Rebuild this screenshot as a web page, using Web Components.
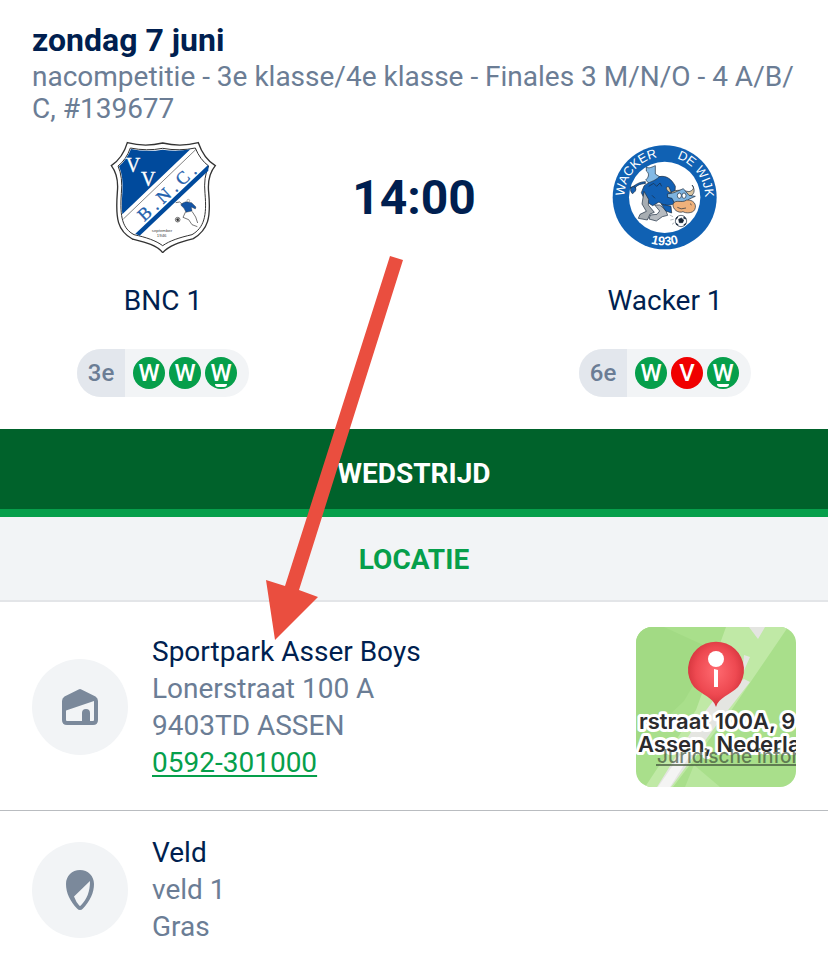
<!DOCTYPE html>
<html lang="nl">
<head>
<meta charset="utf-8">
<meta name="viewport" content="width=device-width, initial-scale=1">
<title>BNC 1 - Wacker 1</title>
<style>
    body {
        margin: 0;
        background: #fff;
        font-family: Roboto, "Liberation Sans", sans-serif;
        font-size: 28px;
        line-height: 32px;
        color: #001f50;
        --navy: #001f50;
        --grey: #6b7d95;
        --green: #069f4b;
        --dark-green: #00622b;
        --soft: #f2f4f6;
    }
</style>
</head>
<body>
<match-page>
    <match-header>
        <span slot="date">zondag 7 juni</span>
        <span slot="competition">nacompetitie - 3e klasse/4e klasse - Finales 3 M/N/O - 4 A/B/<wbr>C, #139677</span>
        <team-card slot="home" rank="3e" form="W W W">
            <bnc-logo slot="logo"></bnc-logo>
            BNC 1
        </team-card>
        <span slot="time">14:00</span>
        <team-card slot="away" rank="6e" form="W V W">
            <wacker-logo slot="logo"></wacker-logo>
            Wacker 1
        </team-card>
    </match-header>
    <tab-bar>WEDSTRIJD</tab-bar>
    <section-title>LOCATIE</section-title>
    <info-row>
        <home-icon slot="icon"></home-icon>
        <span slot="title">Sportpark Asser Boys</span>
        <span>Lonerstraat 100 A</span>
        <span>9403TD ASSEN</span>
        <a href="tel:0592301000">0592-301000</a>
        <map-preview slot="end"></map-preview>
    </info-row>
    <info-row last>
        <field-icon slot="icon"></field-icon>
        <span slot="title">Veld</span>
        <span>veld 1</span>
        <span>Gras</span>
    </info-row>
    <pointer-arrow slot="overlay"></pointer-arrow>
</match-page>

<script>
// Page shell, the overlay lies on top of the content
class MatchPage extends HTMLElement {
    constructor() {
        super();
        this.attachShadow({ mode: 'open' });
    }

    connectedCallback() {
        this.shadowRoot.innerHTML = `
            <style>
                :host {
                    display: block;
                    position: relative;
                }
            </style>
            <main><slot></slot></main>
            <slot name="overlay"></slot>
        `;
    }
}

class MatchHeader extends HTMLElement {
    constructor() {
        super();
        this.attachShadow({ mode: 'open' });
    }

    connectedCallback() {
        this.shadowRoot.innerHTML = `
            <style>
                :host {
                    display: block;
                    padding: 24px 32px 32px;
                }
                h1 {
                    margin: 0 0 5px;
                    font-size: 32px;
                    font-weight: 700;
                    line-height: 32px;
                }
                p {
                    margin: 0 0 16px;
                    color: var(--grey);
                }
                .teams {
                    display: grid;
                    grid-template-columns: 1fr 240px 1fr;
                }
                .time {
                    font-size: 48px;
                    font-weight: 700;
                    line-height: 114px;
                    text-align: center;
                }
            </style>
            <h1><slot name="date"></slot></h1>
            <p><slot name="competition"></slot></p>
            <div class="teams">
                <slot name="home"></slot>
                <div class="time"><slot name="time"></slot></div>
                <slot name="away"></slot>
            </div>
        `;
    }
}

class TeamCard extends HTMLElement {
    constructor() {
        super();
        this.attachShadow({ mode: 'open' });
    }

    connectedCallback() {
        const results = this.getAttribute('form').split(' ');
        this.shadowRoot.innerHTML = `
            <style>
                :host {
                    display: flex;
                    flex-direction: column;
                    align-items: center;
                    gap: 32px;
                }
                .form {
                    display: flex;
                    align-items: center;
                    gap: 4px;
                    height: 48px;
                    padding-right: 12px;
                    border-radius: 24px;
                    overflow: hidden;
                    background: var(--soft);
                }
                .rank {
                    width: 48px;
                    margin-right: 4px;
                    font-size: 24px;
                    font-weight: 500;
                    line-height: 48px;
                    text-align: center;
                    color: var(--grey);
                    background: #e3e7ed;
                }
            </style>
            <slot name="logo"></slot>
            <div><slot></slot></div>
            <div class="form">
                <span class="rank">${this.getAttribute('rank')}</span>
                ${results.map((r, i) => `<result-badge result="${r}" ${i === results.length - 1 ? 'latest' : ''}></result-badge>`).join('')}
            </div>
        `;
    }
}

// W = gewonnen, V = verloren
class ResultBadge extends HTMLElement {
    constructor() {
        super();
        this.attachShadow({ mode: 'open' });
    }

    connectedCallback() {
        this.shadowRoot.innerHTML = `
            <style>
                :host {
                    display: block;
                    position: relative;
                    width: 32px;
                    border-radius: 50%;
                    font-size: 24px;
                    font-weight: 500;
                    line-height: 32px;
                    text-align: center;
                    color: #fff;
                    background: var(--green);
                }
                :host([result="V"]) {
                    background: #f00000;
                }
                :host([latest])::after {
                    content: "";
                    position: absolute;
                    left: 10px;
                    bottom: 2px;
                    width: 12px;
                    height: 3px;
                    border-radius: 0 0 6px 6px;
                    background: #fff;
                }
            </style>
            ${this.getAttribute('result')}
        `;
    }
}

class BncLogo extends HTMLElement {
    constructor() {
        super();
        this.attachShadow({ mode: 'open' });
    }

    connectedCallback() {
        this.shadowRoot.innerHTML = `
            <style>
                :host, svg {
                    display: block;
                    width: 112px;
                    height: 112px;
                }
            </style>
            <svg viewBox="21 30 336 336" font-family="Liberation Serif, serif">
                <path d="M82 35Q135 49 188 36Q242 49 295 35Q311 82 346 104Q321 134 326 184C333 260 325 296 280 323C239 334 208 342 188 365C170 342 136 334 97 324C53 300 46 264 52 184Q57 134 34 104Q69 80 82 35Z" fill="#fff" stroke="#333" stroke-width="4"/>
                <path d="M91 51Q140 61 188 52Q238 61 286 51Q300 86 326 105Q310 139 315 188C321 255 312 290 276 311C237 320 210 329 188 344C168 329 139 319 102 311C68 293 59 259 64 188Q69 138 54 105Q78 87 91 51Z" fill="#fff" stroke="#333" stroke-width="3"/>
                <path d="M93 54Q140 64 188 56Q230 63 271 55L67 250Q64 224 67 186Q71 138 57 106Q79 88 93 54Z" fill="#004a9c"/>
                <path d="M288 55L70 264" stroke="#444" stroke-width="2"/>
                <path d="M325 101L106 308L119 314L325 119Z" fill="#004a9c"/>
                <g fill="#fff" stroke="#fff" font-size="60">
                    <text x="77" y="124">V</text>
                    <text x="123" y="164">V</text>
                </g>
                <text transform="translate(133 273) rotate(-43)" fill="#1f61ad" stroke="#1f61ad" font-size="54" xml:space="preserve">B . N . C .</text>
                <g fill="#1454a4" stroke="#222" stroke-width="1">
                    <path d="M248 216L258 212L275 215L288 228L286 234L274 228L276 240L258 244L252 232L242 222Z"/>
                    <path d="M257 242L249 259L266 266L276 281L292 287M276 241L287 258L293 276M227 215L239 213L247 220" fill="none" stroke="#333" stroke-width="2"/>
                    <circle cx="265" cy="209" r="4" fill="#fff"/>
                    <circle cx="233" cy="266" r="7" fill="#fff" stroke="#333" stroke-width="2"/>
                    <path d="M229 264L235 262L237 268L232 271Z" fill="#333"/>
                </g>
                <g fill="#444" font-family="Liberation Sans, sans-serif" font-size="13" text-anchor="middle">
                    <text x="186" y="304">september</text>
                    <text x="185" y="318">1946</text>
                </g>
            </svg>
        `;
    }
}

class WackerLogo extends HTMLElement {
    constructor() {
        super();
        this.attachShadow({ mode: 'open' });
    }

    connectedCallback() {
        this.shadowRoot.innerHTML = `
            <style>
                :host, svg {
                    display: block;
                    width: 112px;
                    height: 112px;
                }
            </style>
            <svg viewBox="27 15 336 336" font-family="Liberation Sans, sans-serif">
                <defs>
                    <path id="top" d="M73 183A121 121 0 0 1 315 183"/>
                    <path id="bottom" d="M49 183A145 145 0 0 0 339 183"/>
                </defs>
                <circle cx="194" cy="184" r="156" fill="#1061b3"/>
                <circle cx="194" cy="184" r="107" fill="#fff"/>
                <g fill="#fff" font-size="38">
                    <text><textPath href="#top" startOffset="2">WACKER</textPath></text>
                    <text><textPath href="#top" startOffset="227">DE WIJK</textPath></text>
                    <text font-size="38" font-weight="700" text-anchor="middle"><textPath href="#bottom" startOffset="50%">1930</textPath></text>
                </g>
                <g stroke="#18283c" stroke-width="2" stroke-linejoin="round">
                    <path d="M136 143C119 143 105 150 105 161C98 164 91 160 91 153C98 157 110 137 136 137Z" fill="#155fb2"/>
                    <path d="M105 153C92 148 87 162 97 173C105 168 111 162 105 153Z" fill="#155fb2"/>
                    <path d="M139 93C147 99 158 92 166 89L166 114L185 126L176 144L151 146L137 132C149 121 147 111 139 105Z" fill="#83b9e5"/>
                    <path d="M132 150C145 137 162 138 178 122C200 117 216 131 226 151L223 202C211 211 189 209 177 198L158 209L136 195L124 170Z" fill="#1260b4"/>
                    <path d="M132 166L126 204L139 226L120 235L115 247L142 252L150 234L163 229L145 207L146 190Z" fill="#a7adb2"/>
                    <path d="M164 207L179 225L171 235L151 237L147 249L169 255L187 242L203 238L197 222L179 207Z" fill="#b6bbc0"/>
                    <path d="M184 205L213 211L215 231L197 225Z" fill="#1260b4"/>
                    <path d="M207 153C194 148 198 165 211 170C232 158 248 164 267 167C281 163 284 154 276 147C288 163 282 178 267 182L217 178Z" fill="#d9c4a0"/>
                    <path d="M222 170L250 158L267 178L286 181L266 190L262 205L224 202L216 187L203 184L202 174Z" fill="#7db3df"/>
                    <path d="M219 204C227 188 245 203 260 192C279 190 292 205 284 221C278 233 256 232 249 227C235 233 217 220 219 204Z" fill="#efb17b"/>
                    <ellipse cx="238" cy="179" rx="6" ry="8" fill="#fff"/>
                    <ellipse cx="252" cy="179" rx="6" ry="8" fill="#fff"/>
                    <path d="M146 151L161 142L170 151L180 141L185 151M232 214Q242 222 258 216M270 203L275 207M156 178L165 187" fill="none"/>
                    <circle cx="243" cy="255" r="17" fill="#fff"/>
                    <path d="M236 250L244 246L251 252L248 260L238 260ZM228 246L234 242L229 250ZM252 242L258 249L251 247ZM229 262L235 267L229 266ZM251 267L257 262L255 267Z" fill="#172433"/>
                    <path d="M219 242L209 237M221 250L211 252M223 260L216 265" stroke="#8b949c"/>
                </g>
            </svg>
        `;
    }
}

class TabBar extends HTMLElement {
    constructor() {
        super();
        this.attachShadow({ mode: 'open' });
    }

    connectedCallback() {
        this.shadowRoot.innerHTML = `
            <style>
                :host {
                    display: flex;
                    background: var(--dark-green);
                }
                button {
                    flex: 1;
                    padding: 29px 0 19px;
                    border: 0;
                    border-bottom: 8px solid var(--green);
                    background: none;
                    font: inherit;
                    font-weight: 700;
                    color: #fff;
                }
            </style>
            <button type="button"><slot></slot></button>
        `;
    }
}

class SectionTitle extends HTMLElement {
    constructor() {
        super();
        this.attachShadow({ mode: 'open' });
    }

    connectedCallback() {
        this.shadowRoot.innerHTML = `
            <style>
                :host {
                    display: block;
                    border-bottom: 2px solid #e3e5e8;
                    background: var(--soft);
                }
                h2 {
                    margin: 0;
                    padding: 27px 0 24px;
                    font-size: 28px;
                    font-weight: 700;
                    text-align: center;
                    color: var(--green);
                }
            </style>
            <h2><slot></slot></h2>
        `;
    }
}

class InfoRow extends HTMLElement {
    constructor() {
        super();
        this.attachShadow({ mode: 'open' });
    }

    connectedCallback() {
        this.shadowRoot.innerHTML = `
            <style>
                :host {
                    display: flex;
                    align-items: center;
                    gap: 24px;
                    padding: 25px 32px 23px;
                    border-bottom: 1px solid #b9bcc0;
                }
                :host([last]) {
                    padding-top: 23px;
                    padding-bottom: 16px;
                    border-bottom: 0;
                }
                .icon {
                    display: flex;
                    align-items: center;
                    justify-content: center;
                    width: 96px;
                    height: 96px;
                    border-radius: 50%;
                    background: var(--soft);
                }
                .text {
                    display: flex;
                    flex: 1;
                    flex-direction: column;
                    align-items: flex-start;
                    line-height: 37px;
                    color: var(--grey);
                }
                ::slotted([slot="title"]) {
                    color: var(--navy);
                }
                ::slotted(a) {
                    color: var(--green);
                    text-decoration-thickness: 2px;
                    text-underline-offset: 3px;
                }
            </style>
            <div class="icon"><slot name="icon"></slot></div>
            <div class="text">
                <slot name="title"></slot>
                <slot></slot>
            </div>
            <slot name="end"></slot>
        `;
    }
}

class HomeIcon extends HTMLElement {
    constructor() {
        super();
        this.attachShadow({ mode: 'open' });
    }

    connectedCallback() {
        this.shadowRoot.innerHTML = `
            <style>
                :host, svg {
                    display: block;
                    width: 36px;
                    height: 36px;
                }
            </style>
            <svg viewBox="0 0 36 36">
                <path fill="#7b899b" fill-rule="evenodd" d="M16.600 .4Q18 -.4 19.400 .4L33.500 7.500Q36 9 36 12V31Q36 36 31 36H5Q0 36 0 31V12Q0 9 2.500 7.500ZM4 21.500V31Q4 32 5 32H20V24Q20 20 24 20Q28 20 28 24V32H31Q32 32 32 31V12Z"/>
            </svg>
        `;
    }
}

class FieldIcon extends HTMLElement {
    constructor() {
        super();
        this.attachShadow({ mode: 'open' });
    }

    connectedCallback() {
        this.shadowRoot.innerHTML = `
            <style>
                :host, svg {
                    display: block;
                    width: 28px;
                    height: 40px;
                }
            </style>
            <svg viewBox="0 0 28 40">
                <path fill="#7b899b" fill-rule="evenodd" d="M14 0C22 0 28 6 28 14C28 23 24 31 17 38.500Q14 41.500 11 38.500C4 31 0 23 0 14C0 6 6 0 14 0ZM24 11L8 26.500Q10 32 13.200 35.500Q14 36.300 14.800 35.500C21 29 24 22 24 11Z"/>
            </svg>
        `;
    }
}

class MapPreview extends HTMLElement {
    constructor() {
        super();
        this.attachShadow({ mode: 'open' });
    }

    connectedCallback() {
        this.shadowRoot.innerHTML = `
            <style>
                :host, svg {
                    display: block;
                    width: 160px;
                    height: 160px;
                }
                svg {
                    border-radius: 16px;
                }
            </style>
            <svg viewBox="0 0 160 160" font-family="Inter, sans-serif">
                <defs>
                    <radialGradient id="pin" cx="50%" cy="45%" r="60%">
                        <stop offset="0" stop-color="#ff6a70"/>
                        <stop offset=".6" stop-color="#ee4951"/>
                        <stop offset="1" stop-color="#c92c35"/>
                    </radialGradient>
                </defs>
                <path d="M0 0H160V160H0Z" fill="#a9df8b"/>
                <path d="M0 0H28L78 23L48 74L0 120Z" fill="#a2da84"/>
                <path d="M90 0H152L92 88L37 160H9L60 83Z" fill="#c0e9a6"/>
                <path d="M113 0H129L122 12ZM108 28L114 30L106 48ZM108 52L114 55L82 96L35 160H21L62 94L80 70Z" fill="#e4e5e1"/>
                <path d="M44 128L58 122L34 160H22Z" fill="#f4f4f3"/>
                <path d="M58 138L84 160H49Z" fill="#b8e69d"/>
                <path d="M80 80C77 70 66 68 58 60A28 28 0 1 1 102 60C94 68 83 70 80 80Z" fill="url(#pin)"/>
                <circle cx="80" cy="32" r="8" fill="#fff"/>
                <path d="M78 42L82 43V60H78Z" fill="#fff"/>
                <g font-size="22" font-weight="600" fill="#2b2b2d" stroke="#fff" stroke-width="6" stroke-linejoin="round" paint-order="stroke">
                    <text x="3" y="102">rstraat 100A, 9</text>
                    <text x="2" y="125">Assen, Nederla</text>
                </g>
                <g opacity=".7">
                    <text x="21" y="136" fill="#40533a" font-size="19" font-weight="500">Juridische infor</text>
                    <path d="M20 138H160" stroke="#40533a" stroke-width="2"/>
                </g>
            </svg>
        `;
    }
}

class PointerArrow extends HTMLElement {
    constructor() {
        super();
        this.attachShadow({ mode: 'open' });
    }

    connectedCallback() {
        this.shadowRoot.innerHTML = `
            <style>
                :host {
                    position: absolute;
                    top: 256px;
                    left: 32%;
                    pointer-events: none;
                }
                svg {
                    display: block;
                    width: 140px;
                    height: 384px;
                }
            </style>
            <svg viewBox="265 256 140 384">
                <path fill="#ea4e3f" d="M390 256L403 260L299 590L318 597L275 640L266 580L285 586Z"/>
            </svg>
        `;
    }
}

customElements.define('match-page', MatchPage);
customElements.define('match-header', MatchHeader);
customElements.define('team-card', TeamCard);
customElements.define('result-badge', ResultBadge);
customElements.define('bnc-logo', BncLogo);
customElements.define('wacker-logo', WackerLogo);
customElements.define('tab-bar', TabBar);
customElements.define('section-title', SectionTitle);
customElements.define('info-row', InfoRow);
customElements.define('home-icon', HomeIcon);
customElements.define('field-icon', FieldIcon);
customElements.define('map-preview', MapPreview);
customElements.define('pointer-arrow', PointerArrow);
</script>
</body>
</html>
